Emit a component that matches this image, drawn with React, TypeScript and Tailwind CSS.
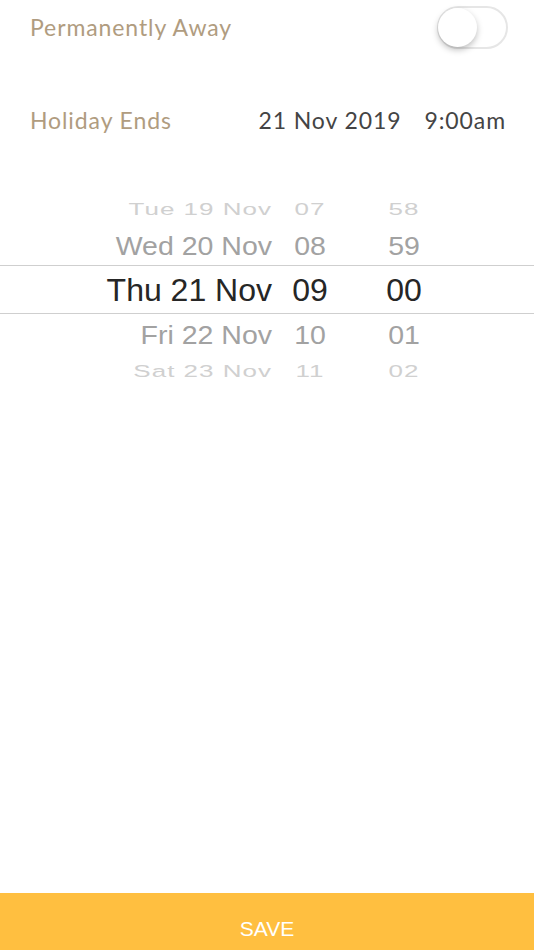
import React from "react";

const lab = "font-['Lato','Noto_Sans',sans-serif]";
const pk = "font-['Liberation_Sans','Arial',sans-serif]";

type Row = { d: string; h: string; m: string; cls: string; txt: string; tr: string };

function PickerRow({ d, h, m, cls, txt, tr }: Row) {
  return (
    <div className={`flex w-full items-center ${cls}`}>
      <div className={`w-[272px] text-right whitespace-nowrap ${txt} ${tr}`}>{d}</div>
      <div className="w-[10px]" />
      <div className={`w-[56px] text-center ${txt} ${tr}`}>{h}</div>
      <div className="w-[38px]" />
      <div className={`w-[56px] text-center ${txt} ${tr}`}>{m}</div>
    </div>
  );
}

export default function App() {
  return (
    <div className="flex h-[950px] w-[534px] flex-col bg-white">
      <div className="flex h-[54px] items-center justify-between pl-[30px] pr-[26px]">
        <span className={`${lab} text-[23px] tracking-[0.9px] text-[#b09c80]`}>Permanently Away</span>
        <div className="relative h-[43px] w-[71px] rounded-full border-2 border-[#e6e6e6] bg-white">
          <div className="absolute left-[-1px] top-[0px] h-[39px] w-[39px] rounded-full bg-white shadow-[0_3px_6px_rgba(0,0,0,0.25)]" />
        </div>
      </div>
      <div className="mt-[40px] flex h-[52px] items-center justify-between pl-[30px] pr-[28px]">
        <span className={`${lab} text-[23px] tracking-[0.9px] text-[#b09c80]`}>Holiday Ends</span>
        <div className={`${lab} flex gap-[23px] text-[23px] tracking-[0.9px] text-[#444444]`}>
          <span>21 Nov 2019</span>
          <span>9:00am</span>
        </div>
      </div>
      <div className={`${pk} mt-[45px] flex flex-col`}>
        <PickerRow d="Tue 19 Nov" h="07" m="58" cls="h-[36px]" txt="text-[26px] text-[#d0d0d0] tracking-[1px]" tr="scale-y-[0.62]" />
        <PickerRow d="Wed 20 Nov" h="08" m="59" cls="h-[38px]" txt="text-[28.5px] text-[#a2a2a2]" tr="scale-y-[0.88]" />
        <div className="w-full border-y border-[#cfcfcf]">
          <PickerRow d="Thu 21 Nov" h="09" m="00" cls="h-[47px]" txt="text-[32px] text-[#262626]" tr="" />
        </div>
        <PickerRow d="Fri 22 Nov" h="10" m="01" cls="h-[42px]" txt="text-[28.5px] text-[#a2a2a2]" tr="scale-y-[0.88]" />
        <PickerRow d="Sat 23 Nov" h="11" m="02" cls="h-[30px]" txt="text-[26px] text-[#d0d0d0] tracking-[1px]" tr="scale-y-[0.62]" />
      </div>
      <div className="flex-1" />
      <div className="flex h-[57px] items-center justify-center bg-[#ffbf40] pt-[14px]">
        <span className={`${pk} text-[21px] text-white`}>SAVE</span>
      </div>
    </div>
  );
}
